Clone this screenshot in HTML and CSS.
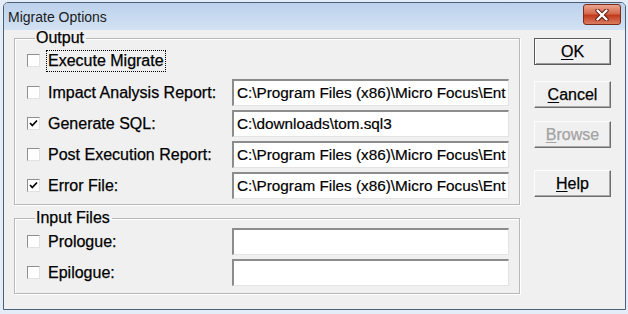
FILE: index.html
```html
<!DOCTYPE html>
<html lang="en">
<head>
    <meta charset="UTF-8">
    <meta name="viewport" content="width=device-width, initial-scale=1.0">
    <title>Migrate Options</title>
    <link rel="stylesheet" href="styles.css">
</head>
<body>
    <div class="window">
        <div class="titlebar">
            <span class="title">Migrate Options</span>
            <span class="close-btn">
                <svg width="14" height="12" viewBox="0 0 14 12">
                    <path d="M2.5 1.5 L11.5 10.5 M11.5 1.5 L2.5 10.5" stroke="#5a1a10" stroke-width="4.2" stroke-linecap="round"/>
                    <path d="M2.5 1.5 L11.5 10.5 M11.5 1.5 L2.5 10.5" stroke="#ffffff" stroke-width="2.4" stroke-linecap="round"/>
                </svg>
            </span>
        </div>

        <div class="client">
            <div class="groups">
                <fieldset class="group group-output">
                    <legend>Output</legend>

                    <div class="row row-first">
                        <label class="check">
                            <span class="box"></span>
                            <span class="text focused">Execute Migrate</span>
                        </label>
                    </div>

                    <div class="row">
                        <label class="check">
                            <span class="box"></span>
                            <span class="text">Impact Analysis Report:</span>
                        </label>
                        <div class="field">C:\Program Files (x86)\Micro Focus\Ent</div>
                    </div>

                    <div class="row">
                        <label class="check">
                            <span class="box">
                                <svg width="11" height="11" viewBox="0 0 11 11"><path d="M2 5 L4.3 7.5 L9 2.5" fill="none" stroke="#000" stroke-width="1.7"/></svg>
                            </span>
                            <span class="text">Generate SQL:</span>
                        </label>
                        <div class="field">C:\downloads\tom.sql3</div>
                    </div>

                    <div class="row">
                        <label class="check">
                            <span class="box"></span>
                            <span class="text">Post Execution Report:</span>
                        </label>
                        <div class="field">C:\Program Files (x86)\Micro Focus\Ent</div>
                    </div>

                    <div class="row">
                        <label class="check">
                            <span class="box">
                                <svg width="11" height="11" viewBox="0 0 11 11"><path d="M2 5 L4.3 7.5 L9 2.5" fill="none" stroke="#000" stroke-width="1.7"/></svg>
                            </span>
                            <span class="text">Error File:</span>
                        </label>
                        <div class="field">C:\Program Files (x86)\Micro Focus\Ent</div>
                    </div>
                </fieldset>

                <fieldset class="group group-input">
                    <legend>Input Files</legend>

                    <div class="row">
                        <label class="check">
                            <span class="box"></span>
                            <span class="text">Prologue:</span>
                        </label>
                        <div class="field"></div>
                    </div>

                    <div class="row">
                        <label class="check">
                            <span class="box"></span>
                            <span class="text">Epilogue:</span>
                        </label>
                        <div class="field"></div>
                    </div>
                </fieldset>
            </div>

            <div class="buttons">
                <button class="btn btn-default"><u>O</u>K</button>
                <button class="btn btn-cancel"><u>C</u>ancel</button>
                <button class="btn btn-browse" disabled><u>B</u>rowse</button>
                <button class="btn btn-help"><u>H</u>elp</button>
            </div>
        </div>
    </div>
</body>
</html>
```

FILE: styles.css
```css
* {
    margin: 0;
    padding: 0;
    box-sizing: border-box;
}

body {
    font-family: "Liberation Sans", Arial, sans-serif;
    background: #e4edf7;
    color: #000;
    padding: 2px 0 0 3px;
}

.window {
    width: 623px;
    height: 308px;
    border: 1px solid #4b5f77;
    border-radius: 5px 5px 0 0;
    background: #f0f0f0;
    overflow: hidden;
}

.titlebar {
    height: 27px;
    display: flex;
    align-items: flex-start;
    padding-left: 4px;
    background: linear-gradient(#bcd2ec, #c9dbf0 60%, #d3e2f3);
}

.title {
    font-size: 14px;
    line-height: 16px;
    margin-top: 6px;
    color: #1b1b1b;
}

.close-btn {
    margin-left: auto;
    margin-right: 4px;
    margin-top: 1px;
    width: 38px;
    height: 21px;
    display: flex;
    align-items: center;
    justify-content: center;
    border: 1px solid #7a2b1c;
    border-radius: 3px;
    background: linear-gradient(#eaa48f, #d5694d 45%, #c23a1c 55%, #dc7c60);
}

.client {
    display: flex;
    padding: 0 0 0 10px;
}

.groups {
    width: 506px;
}

.group {
    border: 1px solid #b8b8b8;
    box-shadow: 1px 1px 0 #fff, inset 1px 1px 0 #fff;
    padding: 0 9px 0 12px;
}

.group legend {
    font-size: 16px;
    line-height: 16px;
    padding: 0 2px 0 1px;
    margin-left: 8px;
    -webkit-text-stroke: 0.25px #000;
}

.group-output {
    padding-bottom: 3px;
}

.group-input {
    margin-top: 5px;
    padding-bottom: 5px;
}

.row {
    height: 31px;
    display: flex;
    align-items: center;
}

.row-first {
    height: 33px;
    margin-top: -2px;
}

.check {
    width: 205px;
    display: flex;
    align-items: center;
    font-size: 16px;
    -webkit-text-stroke: 0.25px #000;
}

.box {
    width: 13px;
    height: 13px;
    flex-shrink: 0;
    background: #fff;
    border: 1px solid;
    border-color: #8e8e8e #e2e2e2 #e2e2e2 #8e8e8e;
    display: flex;
    align-items: center;
    justify-content: center;
}

.text {
    margin-left: 6px;
    padding: 0 1px;
    line-height: 20px;
    border: 1px solid transparent;
    white-space: nowrap;
}

.text.focused {
    border: 1px dotted #000;
}

.field {
    width: 277px;
    height: 27px;
    background: #fff;
    border-style: solid;
    border-width: 2px 1px 1px 2px;
    border-color: #8c8c8c #e3e3e3 #e3e3e3 #8c8c8c;
    font-size: 15.3px;
    line-height: 23px;
    padding-left: 3px;
    white-space: nowrap;
    overflow: hidden;
    -webkit-text-stroke: 0.2px #000;
}

.buttons {
    margin-left: 14px;
    padding-top: 8px;
    display: flex;
    flex-direction: column;
}

.btn {
    width: 77px;
    height: 27px;
    font-family: "Liberation Sans", Arial, sans-serif;
    font-size: 16px;
    color: #000;
    background: #f0f0f0;
    border: 1px solid;
    border-color: #fdfdfd #6e6e6e #6e6e6e #fdfdfd;
    box-shadow: inset -1px -1px 0 #a8a8a8;
    -webkit-text-stroke: 0.25px currentColor;
}

.btn u {
    text-underline-offset: 2px;
}

.btn-default {
    border-color: #5a5a5a;
    box-shadow: inset 1px 1px 0 #fdfdfd, inset -1px -1px 0 #9a9a9a;
}

.btn-cancel {
    margin-top: 16px;
}

.btn-browse {
    margin-top: 13px;
    color: #a3a3a3;
}

.btn-help {
    margin-top: 22px;
}
```
